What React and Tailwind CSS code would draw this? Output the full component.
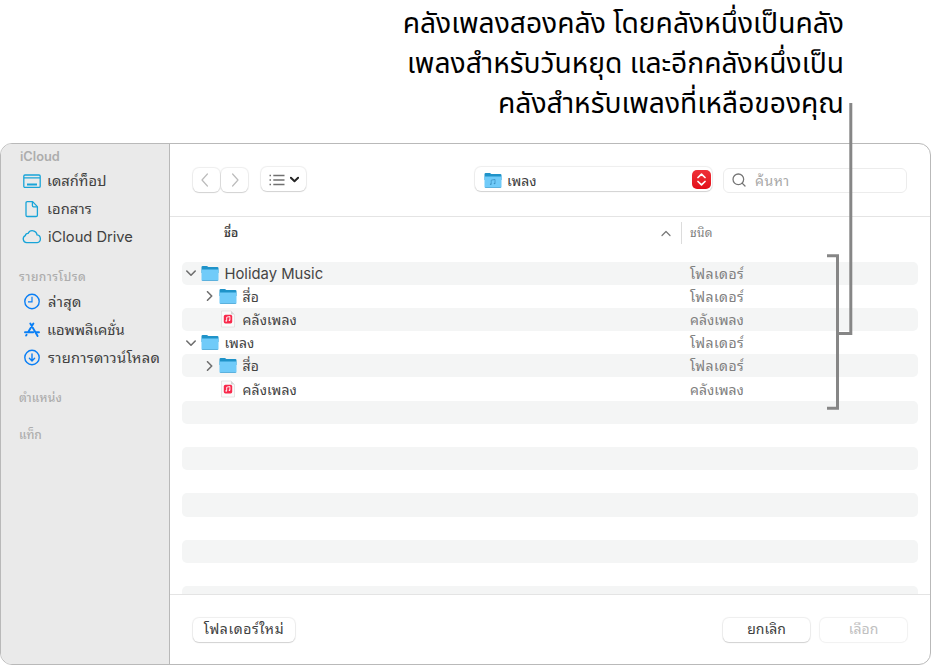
import { Search } from 'lucide-react'

const rows = [
  { depth: 0, open: true, icon: 'folder', name: 'Holiday Music', kind: 'โฟลเดอร์' },
  { depth: 1, open: false, icon: 'folder', name: 'สื่อ', kind: 'โฟลเดอร์' },
  { depth: 1, icon: 'library', name: 'คลังเพลง', kind: 'คลังเพลง' },
  { depth: 0, open: true, icon: 'folder', name: 'เพลง', kind: 'โฟลเดอร์' },
  { depth: 1, open: false, icon: 'folder', name: 'สื่อ', kind: 'โฟลเดอร์' },
  { depth: 1, icon: 'library', name: 'คลังเพลง', kind: 'คลังเพลง' },
]

const emptyRows = [0, 1, 2, 3, 4, 5, 6, 7, 8]

function Folder({ music }) {
  return (
    <svg className="h-[17px] w-[18px] shrink-0" viewBox="0 0 18 17">
      <path d="M0.5 2.2Q0.5 1 1.7 1H5.6Q6.3 1 6.8 1.5L7.3 2H16.3Q17.5 2 17.5 3.2V8H0.5Z" fill="#1f93c9" />
      <path d="M0.5 4.6H17.5V14.8Q17.5 16 16.3 16H1.7Q0.5 16 0.5 14.8Z" fill="#70cbf9" />
      <path d="M0.8 15.2Q1.1 16 1.9 16H16.1Q16.9 16 17.2 15.2Z" fill="#55a9d4" />
      {music && (
        <g fill="#3c93c4">
          <path d="M7.2 12.2V8.2L11 7.4V11.4" fill="none" stroke="#3c93c4" strokeWidth="0.8" />
          <circle cx="6.7" cy="12.2" r="0.8" />
          <circle cx="10.5" cy="11.5" r="0.8" />
        </g>
      )}
    </svg>
  )
}

function LibraryIcon() {
  return (
    <svg className="h-[18px] w-[14px] shrink-0" viewBox="0 0 14 18">
      <path d="M0.5 1H10L13.5 4.5V17H0.5Z" fill="#fafafa" stroke="#dcdcdc" strokeWidth="0.7" />
      <path d="M10 1V4.5H13.5Z" fill="#d5d5d5" />
      <rect x="2.8" y="4.8" width="8.4" height="8.6" rx="1.6" fill="#f8294b" />
      <path d="M5.7 10.8V7.2L8.9 6.5V10.2" fill="none" stroke="#fff" strokeWidth="0.9" />
      <circle cx="5.2" cy="10.9" r="0.8" fill="#fff" />
      <circle cx="8.4" cy="10.3" r="0.8" fill="#fff" />
    </svg>
  )
}

function Chevron({ d, className }) {
  return (
    <svg className={className} viewBox="0 0 10 10" fill="none" stroke="currentColor" strokeLinecap="round" strokeLinejoin="round">
      <path d={d} />
    </svg>
  )
}

function DesktopIcon() {
  return (
    <svg className="size-[18px]" viewBox="0 0 18 18" fill="none" stroke="#18a4d8" strokeWidth="1.3">
      <rect x="0.8" y="3" width="16.4" height="12.4" rx="1.2" />
      <path d="M1 5.8H17" />
      <path d="M4 12.6H14" strokeWidth="2" />
    </svg>
  )
}

function DocumentIcon() {
  return (
    <svg className="size-[18px]" viewBox="0 0 18 18" fill="none" stroke="#18a4d8" strokeWidth="1.3" strokeLinejoin="round">
      <path d="M4.3 1.6H9.6L14.4 6.6V15.2Q14.4 16.5 13.1 16.5H4.3Q3 16.5 3 15.2V2.9Q3 1.6 4.3 1.6Z" />
      <path d="M9.4 1.8V5.6Q9.4 6.8 10.6 6.8H14.2" />
    </svg>
  )
}

function CloudIcon() {
  return (
    <svg className="h-[18px] w-[20px]" viewBox="0 0 20 18" fill="none" stroke="#18a4d8" strokeWidth="1.3" strokeLinejoin="round">
      <path d="M4.6 14.6A3.7 3.7 0 0 1 3.3 7.6A2.7 2.7 0 0 1 6.1 5.4A4.7 4.7 0 0 1 15 6.9A3.9 3.9 0 0 1 15.2 14.6Z" />
    </svg>
  )
}

function ClockIcon() {
  return (
    <svg className="size-[18px]" viewBox="0 0 18 18" fill="none" stroke="#0a7ff5" strokeWidth="1.4">
      <circle cx="9" cy="8.5" r="7.2" />
      <path d="M9 3.8V8.8H5" strokeWidth="1.2" />
    </svg>
  )
}

function AppsIcon() {
  return (
    <svg className="size-[18px]" viewBox="0 0 18 18" fill="none" stroke="#0a7ff5" strokeWidth="1.9" strokeLinecap="round">
      <path d="M7.3 2.6L14.6 14.9M10.4 2.6L5.2 11.1M2 11.3H10.2M13.3 11.3H16M3.6 13.8L3.1 14.6" />
    </svg>
  )
}

function DownloadIcon() {
  return (
    <svg className="size-[18px]" viewBox="0 0 18 18" fill="none" stroke="#0a7ff5" strokeWidth="1.4" strokeLinecap="round" strokeLinejoin="round">
      <circle cx="9" cy="8.5" r="7.2" />
      <path d="M9 5V11.8M6.4 9.3L9 11.9L11.6 9.3" />
    </svg>
  )
}

function SidebarItem({ icon, children, className = '' }) {
  return (
    <div className="flex h-7 items-center text-[14.7px] text-[#414141]">
      <span className="flex w-[47px] justify-center pl-[15px]">{icon}</span>
      <span className={`whitespace-nowrap ${className}`}>{children}</span>
    </div>
  )
}

function Sidebar() {
  return (
    <aside className="w-[169px] shrink-0 border-r border-[#b9b9b9] bg-[#eaeaea]">
      <h2 className="flex h-[23px] items-center pl-[19px] pt-[2px] text-[12.8px] font-semibold text-[#adadad]">iCloud</h2>
      <SidebarItem icon={<DesktopIcon />} className="-ml-px">เดสก์ท็อป</SidebarItem>
      <SidebarItem icon={<DocumentIcon />} className="-ml-px tracking-[0.1px]">เอกสาร</SidebarItem>
      <SidebarItem icon={<CloudIcon />}>iCloud Drive</SidebarItem>
      <h2 className="mt-[14px] flex h-[23px] items-center pl-[18px] text-xs font-medium tracking-[0.5px] text-[#adadad]">รายการโปรด</h2>
      <SidebarItem icon={<ClockIcon />} className="tracking-[0.4px]">ล่าสุด</SidebarItem>
      <SidebarItem icon={<AppsIcon />} className="-ml-px -tracking-[0.1px]">แอพพลิเคชั่น</SidebarItem>
      <SidebarItem icon={<DownloadIcon />} className="tracking-[0.3px]">รายการดาวน์โหลด</SidebarItem>
      <h2 className="mt-[7px] flex h-[37px] items-center pl-[18px] text-xs font-medium tracking-[0.2px] text-[#adadad]">ตำแหน่ง</h2>
      <h2 className="flex h-[37px] items-center pl-[18px] text-xs font-medium text-[#adadad]">แท็ก</h2>
    </aside>
  )
}

function Toolbar() {
  return (
    <div className="flex h-[73px] shrink-0 items-center border-b border-[#e4e4e4] pl-[23px]">
      <div className="flex gap-px text-[#bcbcbc]">
        <button className="flex h-6 w-[27px] items-center justify-center rounded-md bg-white pr-[3px] shadow-[0_0_1px_1px_#00000012,0_1px_1px_#0000001f]">
          <Chevron d="M7 0L2.5 5L7 10" className="h-3 w-3 overflow-visible" />
        </button>
        <button className="flex h-6 w-[27px] items-center justify-center rounded-md bg-white shadow-[0_0_1px_1px_#00000012,0_1px_1px_#0000001f]">
          <Chevron d="M3 0L7.5 5L3 10" className="h-3 w-3 overflow-visible" />
        </button>
      </div>
      <button className="mb-[2px] ml-[13px] flex h-6 w-[45px] items-center gap-[5px] rounded-md bg-white pl-2 shadow-[0_0_1px_1px_#00000012,0_1px_1px_#0000001f]">
        <svg className="mt-[2px] h-3 w-4" viewBox="0 0 16 12" fill="none" stroke="#707070" strokeWidth="1.3">
          <path d="M4.3 1.5H15.5M4.3 6H15.5M4.3 10.5H15.5M0.5 1.5H2M0.5 6H2M0.5 10.5H2" />
        </svg>
        <Chevron d="M1 3L5 7L9 3" className="h-[9px] w-[9px] stroke-[2.2] text-[#262626]" />
      </button>
      <button className="mb-[2px] ml-[169px] flex h-6 w-[237px] items-center rounded-md bg-white pl-[9px] pr-[1px] shadow-[0_0_1px_1px_#00000012,0_1px_1px_#0000001f]">
        <span className="mt-[3px]"><Folder music /></span>
        <span className="ml-[5px] mt-[2px] flex-1 text-left text-[14px] text-[#404040]">เพลง</span>
        <span className="flex h-[19px] w-[19px] items-center justify-center rounded-[5px] bg-linear-to-b from-[#ee3038] to-[#e30c18]">
          <svg className="h-[13px] w-[9px]" viewBox="0 0 9 13" fill="none" stroke="#fff" strokeWidth="1.7" strokeLinecap="round" strokeLinejoin="round">
            <path d="M1 4.5L4.5 1.2L8 4.5M1 8.5L4.5 11.8L8 8.5" />
          </svg>
        </span>
      </button>
      <div className="ml-[11px] flex h-[25px] w-[184px] items-center rounded-md border border-[#ececec] bg-white pl-[7px] text-[#a8a8a8]">
        <Search className="size-4 text-[#757575]" strokeWidth={1.9} />
        <span className="ml-[8px] text-[14px] tracking-[0.5px]">ค้นหา</span>
      </div>
    </div>
  )
}

function FileRow({ row, striped }) {
  return (
    <div className={`flex h-[23.2px] shrink-0 items-center rounded-[5px] text-[14px] ${striped ? 'bg-[#f4f5f5]' : ''}`}>
      <div className={`flex w-[508px] items-center ${row.depth ? 'pl-[22px]' : 'pl-1'}`}>
        <span className="flex w-[14.5px] items-center text-[#6f6f6f]">
          {row.open === true && <Chevron d="M0.8 3L5 7.2L9.2 3" className="h-[10px] w-[10px] stroke-[1.6]" />}
          {row.open === false && <Chevron d="M3.5 0.8L7.7 5L3.5 9.2" className="h-[10px] w-[10px] stroke-[1.6]" />}
        </span>
        <span className="flex w-[18px] items-center justify-center">
          {row.icon === 'folder' ? <Folder /> : <LibraryIcon />}
        </span>
        <span className={`ml-[6px] whitespace-nowrap text-[#444] ${row.name === 'Holiday Music' ? 'pt-[2px] text-[14.8px] leading-5' : 'tracking-[0.1px]'}`}>
          {row.name}
        </span>
      </div>
      <span className={`text-[#808080] ${row.icon === 'folder' ? 'tracking-[0.4px]' : ''}`}>{row.kind}</span>
    </div>
  )
}

function FileList() {
  return (
    <div className="flex h-[377px] shrink-0 flex-col overflow-hidden px-3">
      <div className="flex h-[32px] shrink-0 items-center text-xs">
        <span className="w-[437px] pl-[42px] font-semibold text-[#404040]">ชื่อ</span>
        <span className="flex w-[62px] justify-end pr-[10px] text-[#777]">
          <Chevron d="M1 7.5L5 3.5L9 7.5" className="h-[10px] w-[10px] stroke-[1.2]" />
        </span>
        <span className="h-[22px] border-l border-[#dcdcdc]" />
        <span className="pl-2 tracking-[0.3px] text-[#7c7c7c]">ชนิด</span>
      </div>
      <div className="mt-[12.5px] flex flex-col">
        {rows.map((row, i) => (
          <FileRow key={i} row={row} striped={i % 2 === 0} />
        ))}
        {emptyRows.map((i) => (
          <div key={i} className={`h-[23.2px] shrink-0 rounded-[5px] ${i % 2 === 0 ? 'bg-[#f4f5f5]' : ''}`} />
        ))}
      </div>
    </div>
  )
}

function Footer() {
  return (
    <div className="flex flex-1 items-center border-t border-[#e4e4e4] px-[23px] text-[14px] text-[#404040]">
      <button className="h-6 w-[102px] rounded-md bg-white pb-[2px] tracking-[0.6px] shadow-[0_0_1px_1px_#00000012,0_1px_1px_#0000001f]">โฟลเดอร์ใหม่</button>
      <button className="ml-auto h-6 w-[87px] rounded-md bg-white pb-[2px] shadow-[0_0_1px_1px_#00000012,0_1px_1px_#0000001f]">ยกเลิก</button>
      <button className="ml-[10px] h-6 w-[87px] rounded-md bg-white pb-[2px] text-[#c0c0c0] shadow-[0_0_1px_1px_#0000000f]">เลือก</button>
    </div>
  )
}

export default function App() {
  return (
    <div className='relative flex h-[665px] w-[931px] flex-col overflow-hidden bg-white font-[Inter,Thonburi,"Noto_Sans_Thai_Looped","Noto_Looped_Thai",Loma,Waree,Garuda,"Noto_Sans_Thai","Noto_Sans",sans-serif]'>
      <div className='h-[143px] shrink-0 pr-[87px] pt-[5px] text-right font-["Noto_Sans_Thai",Inter,sans-serif] text-[28.2px] font-[370] leading-[40px] text-black'>
        <p>คลังเพลงสองคลัง โดยคลังหนึ่งเป็นคลัง</p>
        <p>เพลงสำหรับวันหยุด และอีกคลังหนึ่งเป็น</p>
        <p>คลังสำหรับเพลงที่เหลือของคุณ</p>
      </div>

      <div className="flex flex-1 overflow-hidden rounded-xl border border-[#b9b9b9]">
        <Sidebar />
        <main className="flex flex-1 flex-col">
          <Toolbar />
          <FileList />
          <Footer />
        </main>
      </div>

      {/* callout bracket */}
      <svg className="pointer-events-none absolute inset-0 h-full w-full" viewBox="0 0 931 665" fill="none" stroke="#868686" strokeWidth="3">
        <path d="M850.8 103V333.5H838" />
        <path d="M827 255.7H837.5V408.3H827" />
      </svg>
    </div>
  )
}
